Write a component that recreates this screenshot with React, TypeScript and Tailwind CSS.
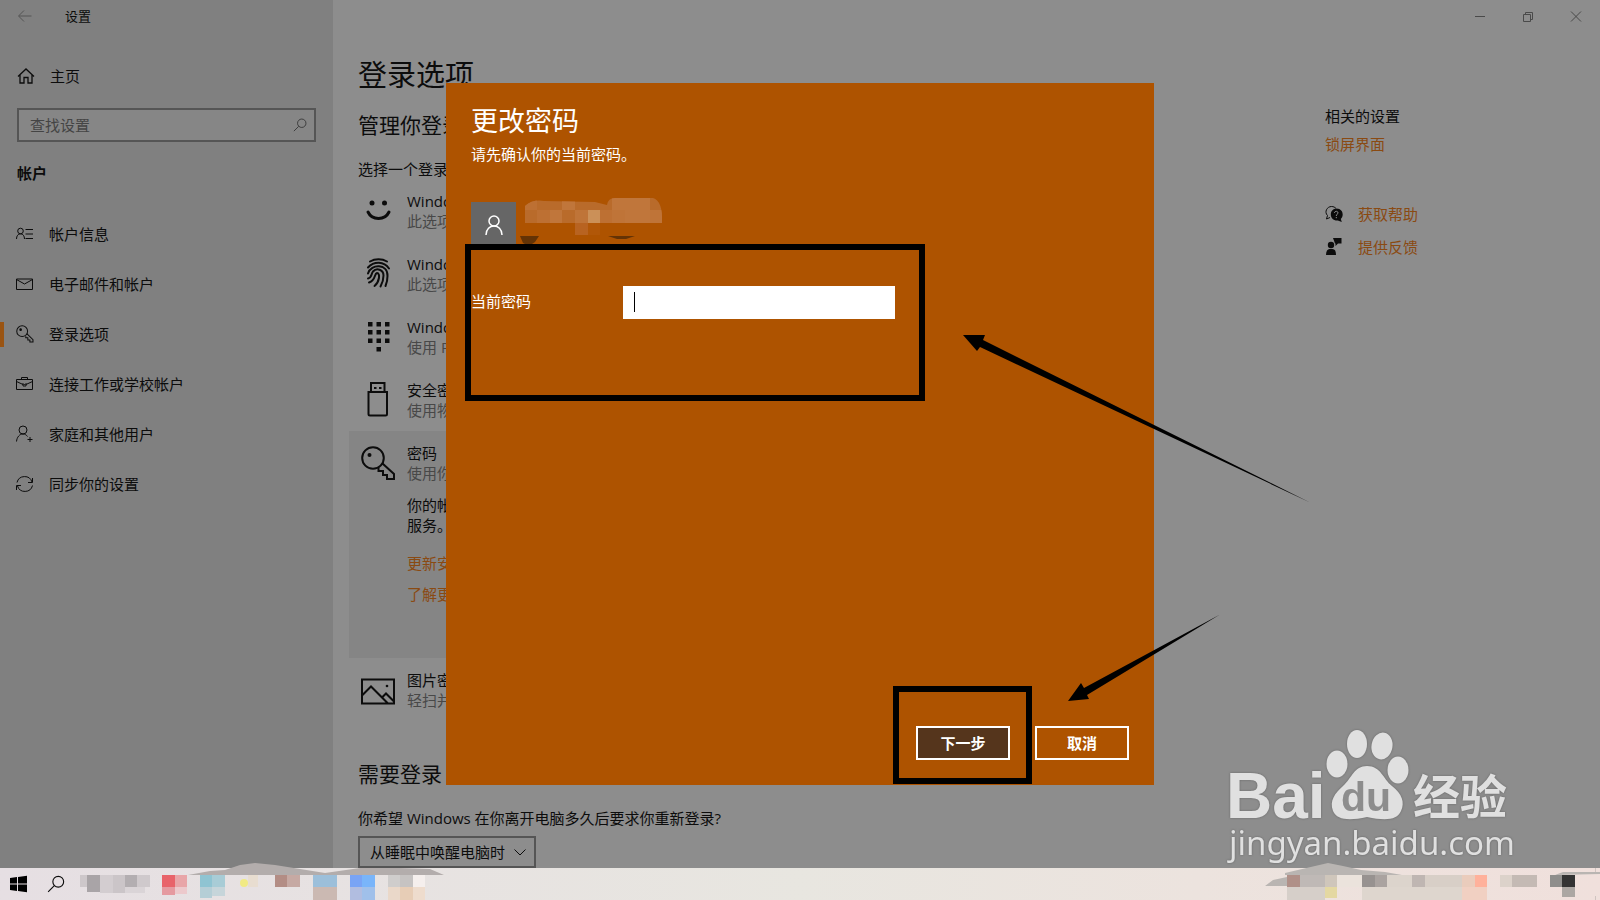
import type { ReactNode } from "react";

interface IconProps {
  children: ReactNode;
  className?: string;
  box?: string;
  stroke?: number;
}

function Icon({ children, className = "size-[18px]", box = "0 0 18 18", stroke = 1 }: IconProps) {
  return (
    <svg
      viewBox={box}
      className={`shrink-0 ${className}`}
      fill="none"
      stroke="currentColor"
      strokeWidth={stroke}
      aria-hidden="true"
    >
      {children}
    </svg>
  );
}

const navItems = [
  {
    label: "帐户信息",
    icon: (
      <Icon>
        <circle cx="4.500" cy="6" r="2.800" />
        <path d="M.500 14c0-3 1.500-5.200 4-5.200s4 2.200 4 5.200M9.500 4.500H17M9.500 9H17M9.500 13.500H17" />
      </Icon>
    ),
  },
  {
    label: "电子邮件和帐户",
    icon: (
      <Icon>
        <path d="M.500 4h16v10.500H.500zM.500 4.500l8 4.500 8-4.500" />
      </Icon>
    ),
  },
  {
    label: "登录选项",
    active: true,
    icon: (
      <Icon box="0 0 35 35" stroke={2}>
        <circle cx="12" cy="12" r="10.500" />
        <circle cx="9" cy="9" r="1.500" fill="currentColor" />
        <path d="M21 17 33 28.500V33h-6v-4h-4v-4h-4v-3" />
      </Icon>
    ),
  },
  {
    label: "连接工作或学校帐户",
    icon: (
      <Icon>
        <path d="M.500 4.500h16v10H.500zM5.500 4.500v-2h6v2M.500 6.500l6.500 3M10 9.500l6.500-3M7 8.500l1.500 1.500L10 8.500v2.500H7z" />
      </Icon>
    ),
  },
  {
    label: "家庭和其他用户",
    icon: (
      <Icon>
        <circle cx="7" cy="5" r="4" />
        <path d="M.500 16.500C1 12 3.500 9 7 9c2 0 3.500 1 4.500 2.500M14 12v5M11.500 14.500h5" />
      </Icon>
    ),
  },
  {
    label: "同步你的设置",
    icon: (
      <Icon>
        <path d="M1 7.500a7.800 7.800 0 0 1 15-.500M16.500 3v4.500H12M16.500 10.500a7.800 7.800 0 0 1-15 .500M.500 15v-4.500H5" />
      </Icon>
    ),
  },
];

const signInOptions = [
  {
    title: "Windows Hello 人脸",
    detail: "此选项当前不可用",
    icon: (
      <Icon className="size-9" box="0 0 36 36" stroke={3}>
        <circle cx="12" cy="11" r="2.500" fill="currentColor" stroke="none" />
        <circle cx="24.500" cy="11" r="2.500" fill="currentColor" stroke="none" />
        <path d="M8 20c4 8.500 17 8.500 21 0" strokeLinecap="round" />
      </Icon>
    ),
  },
  {
    title: "Windows Hello 指纹",
    detail: "此选项当前不可用",
    icon: (
      <Icon className="size-9" box="0 0 36 36" stroke={2}>
        <g strokeLinecap="round">
          <path d="M10 6.500c5-3 12-3 17 0M8 12.500c6-6.500 16-6.500 21 1" />
          <path d="M8 18.500c3-10 20-10 19.500 2.500 0 4-.700 7-2 10" />
          <path d="M8 23.500c4-1 3-4.500 5-7 3.500-4 10.500-2 10.500 4 0 4-1 7.500-3 11" />
          <path d="M9 27.500c7-2 5-9 8-9.500 3.500 0 2.500 9-2.500 13" />
        </g>
      </Icon>
    ),
  },
  {
    title: "Windows Hello PIN",
    detail: "使用 PIN 登录",
    icon: (
      <Icon className="size-9" box="0 0 36 36">
        <path
          fill="currentColor"
          stroke="none"
          d="M8 4h4.500v4.500H8zM16.500 4H21v4.500h-4.500zM25 4h4.500v4.500H25zM8 12h4.500v4.500H8zM16.500 12H21v4.500h-4.500zM25 12h4.500v4.500H25zM8 20.500h4.500V25H8zM16.500 20.500H21V25h-4.500zM25 20.500h4.500V25H25zM16.500 29H21v4.500h-4.500z"
        />
      </Icon>
    ),
  },
  {
    title: "安全密钥",
    detail: "使用物理安全密钥登录",
    icon: (
      <Icon className="size-9" box="0 0 36 36" stroke={2}>
        <path d="M11 11V2h13.500v9M8.500 11H27v22a1.500 1.500 0 0 1-1.500 1.500H10A1.500 1.500 0 0 1 8.500 33z" />
        <path d="M14 7h2.500M19 7h2.500" />
      </Icon>
    ),
  },
];

function SearchGlyph({ className }: { className?: string }) {
  return (
    <Icon className={className} box="0 0 16 16">
      <circle cx="10" cy="6" r="4.800" />
      <path d="M6.500 9.500 1 15" />
    </Icon>
  );
}

function Sidebar() {
  return (
    <aside className="w-[333px] shrink-0 bg-[#808080]">
      <div className="flex h-8 items-center pl-[17px]">
        <button type="button" aria-label="返回" className="text-[#555]">
          <Icon className="size-4" box="0 0 16 16">
            <path d="M2 8h12.500M7 2.500 1.500 8 7 13.500" />
          </Icon>
        </button>
        <span className="ml-8 text-[13px] leading-5">设置</span>
      </div>
      <a href="#home" className="mt-6 flex h-10 items-center gap-[15px] pl-[17px]">
        <Icon>
          <path d="M1 9.500 9 2l8 7.500M3 8v8h4v-5.500h4V16h4V8" strokeWidth="1.300" />
        </Icon>
        <span>主页</span>
      </a>
      <div className="mx-[17px] mt-3 flex h-[34px] items-center border-2 border-[#555] bg-[#868686] pr-[7px] pl-[11px]">
        <input
          type="text"
          aria-label="查找设置"
          placeholder="查找设置"
          className="min-w-0 flex-1 bg-transparent outline-none placeholder:text-[#444]"
        />
        <SearchGlyph className="size-[14px] text-[#333]" />
      </div>
      <h3 className="mt-[21px] pl-[17px] leading-5 font-bold">帐户</h3>
      <nav className="mt-[26px]">
        {navItems.map((item) => (
          <a
            key={item.label}
            href="#section"
            className="flex h-[50px] items-center"
          >
            <span className={item.active ? "h-[25px] w-1 bg-[#9a5412]" : "h-[25px] w-1"} />
            <span className="flex w-[45px] pl-3">{item.icon}</span>
            <span>{item.label}</span>
          </a>
        ))}
      </nav>
    </aside>
  );
}

function WindowControls() {
  return (
    <div className="flex h-[34px] items-center justify-end gap-8 pr-4 text-[#4a4a4a]">
      <button type="button" aria-label="最小化">
        <Icon className="size-4" box="0 0 16 16">
          <path d="M3 7.500h10" />
        </Icon>
      </button>
      <button type="button" aria-label="还原">
        <Icon className="size-4" box="0 0 16 16">
          <path d="M3.500 5.500h7v7h-7zM5.500 5.500v-2h7v7h-2" />
        </Icon>
      </button>
      <button type="button" aria-label="关闭">
        <Icon className="size-4" box="0 0 16 16">
          <path d="m3 2.500 10 10M13 2.500l-10 10" />
        </Icon>
      </button>
    </div>
  );
}

function OptionText({ title, detail }: { title: string; detail: string }) {
  return (
    <div className="leading-5">
      <div>{title}</div>
      <div className="text-[#484848]">{detail}</div>
    </div>
  );
}

function SignInOptions() {
  return (
    <section className="flex-1">
      <h1 className="mt-[21px] pl-[9px] text-[29px] leading-10">登录选项</h1>
      <h2 className="mt-[14px] pl-[9px] text-[21px] leading-8">管理你登录</h2>
      <p className="mt-[18px] pl-[9px] leading-5">选择一个登录</p>
      <ul className="max-w-[520px]">
        {signInOptions.map((option) => (
          <li key={option.title} className="flex h-[63px] pt-3">
            <div className="flex w-[58px] justify-center pt-px">{option.icon}</div>
            <OptionText title={option.title} detail={option.detail} />
          </li>
        ))}
        <li className="flex bg-[#858585] pt-3 pb-[54px]">
          <div className="flex w-[58px] justify-center pt-px">
            <Icon className="size-9" box="0 0 36 36" stroke={2}>
              <circle cx="13" cy="14" r="10.800" />
              <circle cx="9.500" cy="11" r="2" fill="currentColor" stroke="none" />
              <path d="M22.500 19.500 34 30v5h-7v-4h-4v-4h-4.500v-3.500" />
            </Icon>
          </div>
          <div className="leading-5">
            <OptionText title="密码" detail="使用你的帐户密码登录" />
            <p className="mt-3">
              你的帐户密码已设置好,可用于登录 Windows、应用和
              <br />
              服务。
            </p>
            <a href="#questions" className="mt-[18px] block text-[#8a4a12]">
              更新安全问题
            </a>
            <a href="#more" className="mt-[11px] block text-[#8a4a12]">
              了解更多信息
            </a>
          </div>
        </li>
        <li className="flex h-[63px] pt-3">
          <div className="flex w-[58px] justify-center pt-px">
            <Icon className="size-9" box="0 0 36 36" stroke={2}>
              <path d="M2 8.500h32v24H2zM2 24.500l9-9 17 17M22 26.500l4-4 8 8" />
              <circle cx="27" cy="15" r="1.300" fill="currentColor" stroke="none" />
            </Icon>
          </div>
          <OptionText title="图片密码" detail="轻扫并点击你最喜爱的照片以解锁设备" />
        </li>
      </ul>
      <h2 className="mt-[37px] pl-[9px] text-[21px] leading-8">需要登录</h2>
      <label htmlFor="wake" className="mt-[18px] block pl-[9px] leading-5">
        你希望 Windows 在你离开电脑多久后要求你重新登录?
      </label>
      <div className="mt-2 ml-[9px] grid w-[178px]">
        <select
          id="wake"
          className="col-start-1 row-start-1 h-8 appearance-none border-2 border-[#555] bg-transparent pl-[10px] outline-none"
        >
          <option>从睡眠中唤醒电脑时</option>
        </select>
        <Icon
          className="pointer-events-none col-start-1 row-start-1 mr-[10px] size-3 self-center justify-self-end"
          box="0 0 12 12"
        >
          <path d="M.500 3.500 6 9l5.500-5.500" />
        </Icon>
      </div>
    </section>
  );
}

function RelatedSettings() {
  return (
    <section className="w-[275px] shrink-0 pt-[72px] leading-5">
      <h3>相关的设置</h3>
      <a href="#lock" className="mt-2 block text-[#8a4a12]">
        锁屏界面
      </a>
      <div className="mt-[50px] flex items-center gap-[15px]">
        <Icon>
          <path d="M5 12.500 1.500 14l1-3.500C-1 7 2 1.500 6.500 1.500c2 0 3.500.800 4.500 2" />
          <path
            fill="currentColor"
            stroke="none"
            d="M11.500 3.500c7 0 7.500 8 4.300 10.500l1 3-4-1.500C4 16 3.500 4 11.500 3.500z"
          />
          <path stroke="#8d8d8d" d="M9.500 8c0-2.500 3.800-2 3.500 0-.200 1.200-1.700 1.200-1.700 3M11.300 12v1.200" />
        </Icon>
        <a href="#help" className="text-[#8a4a12]">
          获取帮助
        </a>
      </div>
      <div className="mt-[13px] flex items-center gap-[15px]">
        <Icon>
          <g fill="currentColor" stroke="none">
            <circle cx="6" cy="7" r="3.200" />
            <path d="M1 17c0-4 1.500-6 3.500-6h3c2.500 0 3.500 2 3.500 6zM8 0h8.500v5.500H13L10.500 8V5.500H10z" />
          </g>
        </Icon>
        <a href="#feedback" className="text-[#8a4a12]">
          提供反馈
        </a>
      </div>
    </section>
  );
}

// Pixelated cover over the account name
function HiddenName() {
  return (
    <svg viewBox="0 -3 144 50" className="absolute -top-1 left-12 h-[50px] w-36" aria-hidden="true">
      <clipPath id="name-clip">
        <path d="M6 22V5Q14-2 25 0L76 1 88 4Q89-3 96-3H134Q144 0 143 22H81V34H56V22z" />
      </clipPath>
      <g clipPath="url(#name-clip)">
        <path fill="#b96b2b" d="M6-3h137v37H6z" />
        <path fill="#bd7033" d="M6-3h12v12H6zM81 9h12v13H81zM18 9h13v13H18z" />
        <path fill="#c0763b" d="M31 9h12v13H31zM93-3h38V9H93zM43-3h13v12H43zM106 9h25v13h-25z" />
        <path fill="#bf7438" d="M56 9h13v13H56zM131 9h12v13h-12zM93 9h13v13H93z" />
        <path fill="#cb9058" d="M69 9h12v13H69z" />
        <path fill="#b86321" d="M56 22h13v12H56z" />
        <path fill="#b15708" d="M69 22h12v12H69z" />
      </g>
      <path fill="#643305" d="M1 35h19l-4 6-6 4-6-3zM89 35h27l-9 3h-9z" />
    </svg>
  );
}

// Marker frames and arrows drawn over the dialog
function Annotations() {
  return (
    <svg
      viewBox="446 83 708 702"
      className="pointer-events-none absolute top-0 left-0 h-[702px] w-[708px] overflow-visible"
      aria-hidden="true"
    >
      <g fill="none" stroke="#000" strokeWidth="6">
        <path d="M468 247h454v151H468zM896 689h133v92H896z" />
      </g>
      <path d="M963 335h22l-2 5 327 162.500-330-155.500-3 4z" />
      <path d="m1068 701 13-18 3 5 136-73.500-133 80.500 2 4z" />
    </svg>
  );
}

function ChangePasswordDialog() {
  return (
    <div className="absolute inset-0 flex items-center justify-center">
      <div
        role="dialog"
        aria-labelledby="dialog-title"
        className="relative flex min-h-[702px] w-[708px] flex-col bg-[#ae5300] px-[25px] pt-5 pb-[25px] text-white"
      >
        <h2 id="dialog-title" className="text-[27px] leading-9">
          更改密码
        </h2>
        <p className="mt-[5px] leading-5">请先确认你的当前密码。</p>
        <div className="relative mt-[38px]">
          <div className="flex size-[45px] items-center justify-center bg-[#666]">
            <Icon className="size-5" box="0 0 20 20" stroke={1.5}>
              <circle cx="10" cy="6" r="5" />
              <path d="M2 20c0-12 16-12 16 0" />
            </Icon>
          </div>
          <HiddenName />
        </div>
        <div className="mt-[39px] flex h-[33px]">
          <label htmlFor="current" className="w-[152px] pt-[5px]">
            当前密码
          </label>
          <div className="relative h-full w-[272px]">
            <input
              id="current"
              type="password"
              className="h-full w-full bg-white px-[11px] text-black outline-none"
            />
            <span className="absolute top-[6px] left-[11px] h-5 w-px bg-black" />
          </div>
        </div>
        <div className="mt-auto flex justify-end gap-[25px]">
          <button
            type="submit"
            className="h-[34px] w-[94px] border-2 border-white bg-[#55351c] font-bold"
          >
            下一步
          </button>
          <button type="button" className="h-[34px] w-[94px] border-2 border-white font-bold">
            取消
          </button>
        </div>
        <Annotations />
      </div>
    </div>
  );
}

function Watermark() {
  return (
    <svg
      viewBox="0 0 300 144"
      className="pointer-events-none absolute right-20 bottom-0 h-36 w-[300px] drop-shadow-[0_0_1px_#666]"
      fill="#e0e0e0"
    >
      <g transform="translate(0 6)">
        <text x="6" y="88" fontSize="64" fontWeight="700" fontFamily="Liberation Sans, sans-serif">
          Bai
        </text>
        <ellipse cx="117" cy="34" rx="10.500" ry="13.500" />
        <ellipse cx="137" cy="14" rx="10" ry="14" />
        <ellipse cx="162" cy="16" rx="10.500" ry="13.500" transform="rotate(10 162 16)" />
        <ellipse cx="178" cy="40" rx="10.500" ry="13.500" />
        <path d="M147 36c14 0 16 13 25 20 10 8 13 16 9 25-4 9-15 10-34 6-18 4-30 3-34-6-4-10 2-18 10-25 9-8 11-20 24-20z" />
        <text
          x="121"
          y="81"
          fontSize="41"
          fontWeight="700"
          fill="#8d8d8d"
          fontFamily="Liberation Sans, sans-serif"
        >
          du
        </text>
        <text x="193" y="84" fontSize="47" fontWeight="700" fontFamily="Noto Sans CJK SC, sans-serif">
          经验
        </text>
        <text x="9" y="125" fontSize="33" fontFamily="Noto Sans, sans-serif">
          jingyan.baidu.com
        </text>
      </g>
    </svg>
  );
}

type Block = [number, number, number, number, string];

const leftBlocks: Block[] = [
  [80, 7, 8, 12, "#cdc7ca"],
  [87, 7, 13, 17, "#a9a4a7"],
  [100, 7, 13, 18, "#d3cdd0"],
  [113, 7, 12, 18, "#cbc5c8"],
  [125, 7, 12, 12, "#b3aeb1"],
  [137, 7, 13, 12, "#cfc9cc"],
  [125, 19, 20, 6, "#dad4d7"],
  [162, 7, 13, 12, "#e8636a"],
  [175, 7, 12, 12, "#e8a5a8"],
  [162, 19, 13, 8, "#e59aa0"],
  [175, 19, 12, 7, "#ecc9cc"],
  [200, 7, 12, 12, "#8fc4d2"],
  [212, 7, 13, 12, "#a8ccd6"],
  [200, 19, 12, 11, "#b5ced6"],
  [212, 19, 13, 9, "#c6d5da"],
  [248, 7, 10, 12, "#e8ddd0"],
  [275, 7, 12, 12, "#b38d85"],
  [287, 7, 13, 12, "#c6a9a3"],
  [313, 7, 24, 12, "#9cbfda"],
  [313, 19, 24, 13, "#cbb9b2"],
  [350, 7, 12, 12, "#79a4f5"],
  [362, 7, 13, 12, "#79b5fa"],
  [350, 19, 12, 13, "#b1bde0"],
  [362, 19, 13, 13, "#a0c0ea"],
  [388, 7, 12, 12, "#cfcdcc"],
  [400, 7, 13, 12, "#c6c3c2"],
  [388, 19, 12, 13, "#ead8c9"],
  [400, 19, 13, 13, "#e7cdb6"],
  [413, 7, 12, 12, "#f5efed"],
  [413, 19, 12, 13, "#eedccd"],
];

const rightBlocks: Block[] = [
  [1287, 7, 13, 12, "#b09088"],
  [1300, 7, 25, 12, "#bfb9b6"],
  [1325, 7, 12, 12, "#cfc6bb"],
  [1337, 7, 25, 12, "#ebe3dc"],
  [1362, 7, 13, 12, "#979290"],
  [1375, 7, 12, 12, "#aaa3a0"],
  [1387, 7, 25, 12, "#dcd4cc"],
  [1412, 7, 13, 12, "#bfb6b2"],
  [1425, 7, 37, 12, "#d8cfc7"],
  [1462, 7, 13, 12, "#eaccbc"],
  [1475, 7, 12, 12, "#ffb19b"],
  [1500, 7, 12, 12, "#dcd2ca"],
  [1512, 7, 25, 12, "#c4bab4"],
  [1550, 7, 12, 12, "#8f8e8c"],
  [1562, 7, 13, 12, "#333333"],
  [1287, 19, 38, 13, "#d6cfc9"],
  [1325, 19, 12, 11, "#e4d8a2"],
  [1362, 19, 100, 13, "#ded6ce"],
  [1462, 19, 25, 13, "#f1d0c2"],
  [1562, 19, 13, 10, "#aca7a3"],
];

function Mosaic({ blocks }: { blocks: Block[] }) {
  return (
    <>
      {blocks.map(([x, y, w, h, fill]) => (
        <rect key={`${x}-${y}`} x={x} y={y} width={w} height={h} fill={fill} />
      ))}
    </>
  );
}

function Taskbar() {
  return (
    <footer className="relative flex h-8 items-center bg-linear-to-r from-[#e6dfe3] via-[#e8e6e0] to-[#f0e0dc]">
      <button type="button" aria-label="开始" className="ml-[9px]">
        <Icon box="0 0 18 18">
          <path
            fill="#000"
            stroke="none"
            d="M1 3l7-1v6.500H1zM9 1.900 18 .700v7.800H9zM1 9.500h7V16l-7-1zM9 9.500h9v7.800L9 16.100z"
          />
        </Icon>
      </button>
      <button type="button" aria-label="搜索" className="ml-5">
        <SearchGlyph className="size-[18px]" />
      </button>
      <svg
        viewBox="80 0 360 32"
        className="ml-[15px] h-8 w-[360px] shrink-0 overflow-visible"
        aria-hidden="true"
      >
        <path fill="#b3adac" d="M188 7 210 3l15-1 15-5 15-2 20 2 50 8 35-5h40l30 1 14 6z" />
        <Mosaic blocks={leftBlocks} />
        <circle cx="244" cy="15" r="4" fill="#f1ea84" />
      </svg>
      <svg
        viewBox="1260 0 340 32"
        className="ml-auto h-8 w-[340px] shrink-0 overflow-visible"
        aria-hidden="true"
      >
        <path fill="#b9b5b2" d="m1285 5 30-7 13-3 15 3 18 4 24 2 17 3h-117zM1265 18l8-6 14-3v9zM1555 7l8-3h37v2z" />
        <Mosaic blocks={rightBlocks} />
        <path stroke="#cfc4c0" d="M1595.500 0v4M1595.500 28v4" />
      </svg>
    </footer>
  );
}

export default function App() {
  return (
    <div className="flex min-h-screen flex-col overflow-hidden bg-[#8d8d8d] font-['Open_Sans','Noto_Sans_CJK_SC',sans-serif] text-[15px] leading-5 text-[#0c0c0c]">
      <div className="relative flex flex-1">
        <Sidebar />
        <main className="flex min-w-0 flex-1 flex-col">
          <WindowControls />
          <div className="flex flex-1 pl-4">
            <SignInOptions />
            <RelatedSettings />
          </div>
        </main>
        <ChangePasswordDialog />
        <Watermark />
      </div>
      <Taskbar />
    </div>
  );
}
